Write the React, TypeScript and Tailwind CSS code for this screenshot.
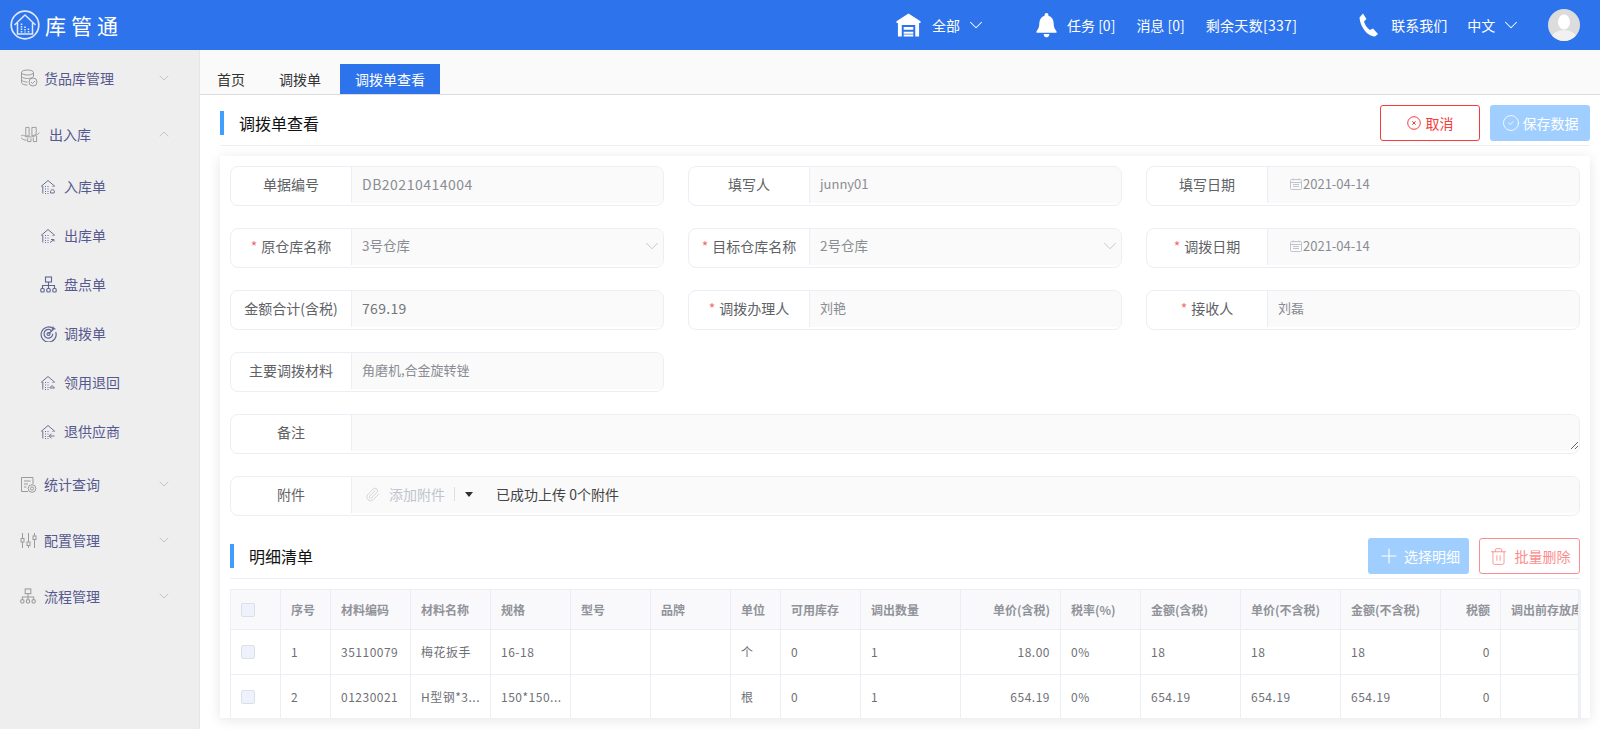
import { ChevronDown, ChevronUp, Plus, Trash2, CircleCheck, Paperclip } from "lucide-react";
import type { ReactNode } from "react";

const font = { fontFamily: '"Noto Sans CJK SC", "Liberation Sans", sans-serif' };

const HomeDots = ({ mark }: { mark: "in" | "out" | "back" | "ret" }) => (
  <svg viewBox="0 0 16 16" className="w-[16px] h-[16px] text-[#6a6f96]" fill="none" stroke="currentColor" strokeWidth="1">
    <path d="M1 7.5 8 1.5l7 6M2.8 7v7.5M13 7v1" />
    <path d="M5 7.5h1M7.5 7.5h1M5 10h1M7.5 10h1M5 12.5h1M7.5 12.5h1M5 14.5h1M7.5 14.5h1" />
    {mark === "in" && <path d="M10.5 12.5a2 2 0 1 1 3.5 1.5h-3.5z" />}
    {mark === "out" && <path d="M10 14.5l4-3M11 11.5h3v2" />}
    {mark === "back" && <path d="M10 12.5l2-2 2.5 2.5h-4.5z" />}
    {mark === "ret" && <path d="M14.5 12H9.5M11.5 9.7 9.2 12l2.3 2.3" />}
  </svg>
);

const iconGray = "w-[17px] h-[17px] text-[#9a9a9a]";

const DbIcon = () => (
  <svg viewBox="0 0 18 18" className="w-[18px] h-[18px] text-[#9a9a9a]" fill="none" stroke="currentColor" strokeWidth="1">
    <ellipse cx="7.5" cy="3.5" rx="6" ry="2.5" />
    <path d="M1.5 3.5v10c0 1.5 2.7 2.5 6 2.5M1.5 7c0 1.5 2.7 2.5 6 2.5s6-1 6-2.5M1.5 10.500c0 1.500 2.700 2.500 6 2.500M13.500 3.500v4" />
    <circle cx="13" cy="13" r="4" />
    <path d="M11 13l1.500 1.500 2.500-2.500" />
  </svg>
);

const InOutIcon = () => (
  <svg viewBox="0 0 22 18" className="w-[21px] h-[17px] text-[#9a9a9a]" fill="none" stroke="currentColor" strokeWidth="1">
    <path d="M6 1.500h3.500v9H6zM12.500 1.500H17v7.500l-4.500 1.500z" />
    <path d="M1 10.500c2-1.500 4-.5 5 1h6c3 0 6-2 8.500-4.500" />
    <path d="M1 12.500c2 2 4 2.500 6 2.500M8 13v3.500h3.500V13M14 12.500v4h3.500v-6" />
  </svg>
);

const OrgIcon = ({ className }: { className: string }) => (
  <svg viewBox="0 0 17 17" className={className} fill="none" stroke="currentColor" strokeWidth="1.100">
    <rect x="5.500" y="1" width="6" height="5" />
    <path d="M8.500 6v3.500M2.500 12.500V9.500h12v3M8.500 9.500v3" />
    <rect x="0.800" y="12.500" width="3.400" height="3.500" rx="1" />
    <rect x="6.800" y="12.500" width="3.400" height="3.500" rx="1" />
    <rect x="12.800" y="12.500" width="3.400" height="3.500" rx="1" />
  </svg>
);

const TargetIcon = () => (
  <svg viewBox="0 0 17 17" className="w-[17px] h-[17px] text-[#5f6592]" fill="none" stroke="currentColor" strokeWidth="1.200">
    <path d="M13.500 3.800A7.500 7.500 0 1 0 15.700 7" />
    <path d="M11.800 6A4.400 4.400 0 1 0 12.800 8.800" />
    <circle cx="8.500" cy="9" r="1.500" />
    <path d="M8.500 9l6-6M13 1.500v2.500h2.500" />
  </svg>
);

const ReportIcon = () => (
  <svg viewBox="0 0 17 17" className={iconGray} fill="none" stroke="currentColor" strokeWidth="1">
    <path d="M8 15.500H1.500v-14h11.500V8" />
    <path d="M4 5h6.500M4 8h4M4 11h2.500" />
    <circle cx="12" cy="12.500" r="3.800" />
    <circle cx="12" cy="12.500" r="1.600" />
  </svg>
);

const SlidersIcon = () => (
  <svg viewBox="0 0 17 17" className={iconGray} fill="none" stroke="currentColor" strokeWidth="1">
    <path d="M2.500 1v5.500M2.500 10v6M8.500 1v9M8.500 13.500V16M14.500 1v3M14.500 7.500V16" />
    <rect x="1" y="6.500" width="3" height="3.500" />
    <rect x="7" y="10" width="3" height="3.500" />
    <rect x="13" y="4" width="3" height="3.500" />
  </svg>
);

const menu: { label: string; icon: ReactNode; gap: string; open?: boolean; children?: { label: string; icon: ReactNode }[] }[] = [
  { label: "货品库管理", icon: <DbIcon />, gap: "ml-[6px]" },
  {
    label: "出入库",
    icon: <InOutIcon />,
    gap: "ml-[8px]",
    open: true,
    children: [
      { label: "入库单", icon: <HomeDots mark="in" /> },
      { label: "出库单", icon: <HomeDots mark="out" /> },
      { label: "盘点单", icon: <OrgIcon className="w-[17px] h-[17px] text-[#5f6592]" /> },
      { label: "调拨单", icon: <TargetIcon /> },
      { label: "领用退回", icon: <HomeDots mark="back" /> },
      { label: "退供应商", icon: <HomeDots mark="ret" /> },
    ],
  },
  { label: "统计查询", icon: <ReportIcon />, gap: "ml-[7px]" },
  { label: "配置管理", icon: <SlidersIcon />, gap: "ml-[7px]" },
  { label: "流程管理", icon: <OrgIcon className="w-[16px] h-[16px] text-[#9a9a9a]" />, gap: "ml-[8px]" },
];

const Sidebar = () => (
  <aside className="w-[200px] shrink-0 bg-[#eeeeee] border-r border-[#e6e6e6]">
    {menu.map((m) => (
      <div key={m.label}>
        <div className="h-[56px] flex items-center pl-[20px] pr-[27px]">
          {m.icon}
          <span className={`${m.gap} text-[14px] text-[#56598f]`}>{m.label}</span>
          <span className="ml-auto text-[#b5b5b5]">
            {m.open ? <ChevronUp size={16} strokeWidth={1.1} /> : <ChevronDown size={16} strokeWidth={1.1} />}
          </span>
        </div>
        {m.children?.map((c) => (
          <div key={c.label} className="h-[49px] flex items-center pl-[40px]">
            <span className="w-[24px]">{c.icon}</span>
            <span className="text-[14px] text-[#56598f]">{c.label}</span>
          </div>
        ))}
      </div>
    ))}
  </aside>
);

const Header = () => (
  <header className="h-[50px] bg-[#2d74ec] flex items-center text-white text-[14px]">
    <svg viewBox="0 0 30 30" className="ml-[10px] w-[30px] h-[30px] shrink-0" fill="none" stroke="#dfe9fb">
      <circle cx="15" cy="15" r="13.800" strokeWidth="1.700" />
      <path d="M4.500 15 15 5l10.500 10M7.500 13v11h15V13" strokeWidth="1.500" />
      <path d="M11.500 13.500v9M15 16.500v6M18.500 18.500v4" strokeWidth="1.600" strokeDasharray="1.500 1" />
    </svg>
    <div className="ml-[5px] text-[21px] leading-none tracking-[5px] w-[80px] whitespace-nowrap">库管通</div>

    <svg viewBox="0 0 26 24" className="ml-[771px] w-[25px] h-[24px]" fill="#fff">
      <path d="M13 0 25.500 8v2H24v14h-4V12H6v12H2V10H.5V8z" />
      <path d="M8 14h10v3H8zM8 19h10v2H8zM8 22h10v2H8z" />
    </svg>
    <span className="ml-[11px]">全部</span>
    <ChevronDown size={22} strokeWidth={1.1} className="ml-[5px]" />

    <svg viewBox="0 0 22 26" className="ml-[49px] w-[21px] h-[25px]" fill="#fff">
      <path d="M11 0c1.200 0 2 .8 2 2v.700c3.500 1 5.500 4 5.500 7.800 0 4 1 6.500 3 8.500v1.500H.5V19c2-2 3-4.500 3-8.500 0-3.800 2-6.800 5.500-7.800V2c0-1.200.8-2 2-2zM8 22h6c0 2-1.300 3.500-3 3.500S8 24 8 22z" />
    </svg>
    <span className="ml-[10px]">任务 [0]</span>
    <span className="ml-[21px]">消息 [0]</span>
    <span className="ml-[21px] tracking-[0.3px]">剩余天数[337]</span>

    <svg viewBox="0 0 22 24" className="ml-[61px] w-[22px] h-[24px]" fill="#fff">
      <path d="M5 .5 8.500 6 6 8.500c.8 3 3 6.500 6 8.500l3-1.500 5 5.500-3 2.500C10 24 2 14 1.500 4.500z" />
    </svg>
    <span className="ml-[11px]">联系我们</span>
    <span className="ml-[20px]">中文</span>
    <ChevronDown size={22} strokeWidth={1.1} className="ml-[5px]" />

    <svg viewBox="0 0 32 32" className="ml-[26px] w-[32px] h-[32px] rounded-full">
      <rect width="32" height="32" fill="#dcdcdc" />
      <ellipse cx="16" cy="13" rx="6" ry="7.500" fill="#fff" />
      <ellipse cx="16" cy="30" rx="13" ry="9" fill="#f1f1f1" />
    </svg>
  </header>
);

const Tabs = () => (
  <div className="h-[45px] shrink-0 bg-[#fafafa] border-b border-[#dcdcdc] flex items-end pl-[2px] gap-[4px] text-[14px]">
    <div className="h-[30px] px-[15px] flex items-center text-[#333]">首页</div>
    <div className="h-[30px] px-[15px] flex items-center text-[#333]">调拨单</div>
    <div className="h-[30px] w-[100px] flex items-center justify-center bg-[#2d74ec] text-white">调拨单查看</div>
  </div>
);

const SectionTitle = ({ title, children }: { title: string; children: ReactNode }) => (
  <div className="flex items-center justify-between border-b border-[#ebeef5] h-[41px] pb-[4px]">
    <div className="flex items-center">
      <span className="w-[4px] h-[24px] bg-[#409eff]" />
      <span className="ml-[15px] text-[16px] text-[#111]">{title}</span>
    </div>
    <div className="flex gap-[10px]">{children}</div>
  </div>
);

const Field = ({ label, required, children, className = "" }: { label: string; required?: boolean; children?: ReactNode; className?: string }) => (
  <div className={`h-[40px] flex border border-[#ebeef5] rounded-[8px] overflow-hidden ${className}`}>
    <div className="w-[120px] shrink-0 flex items-center justify-center text-[14px] text-[#606266] whitespace-nowrap mb-[2px] pb-[2px]">
      {required && <span className="text-[#f56c6c] mr-[4px]">*</span>}
      {label}
    </div>
    <div className="flex-1 min-w-0 bg-[#fafafa] border-l border-[#ebeef5] mb-[2px] pb-[2px] flex items-center pl-[10px] pr-[12px] text-[13px] text-[#8a8d93]">
      {children}
    </div>
  </div>
);

const DateValue = ({ value }: { value: string }) => (
  <>
    <svg viewBox="0 0 12 12" className="ml-[12px] w-[12px] h-[12px] mr-[1px] text-[#c0c4cc]" fill="none" stroke="currentColor">
      <rect x="0.500" y="1.500" width="11" height="10" rx="1" />
      <path d="M.5 4.500h11M3 6.500h6M3 8.500h6M3 .5v2M9 .5v2" />
    </svg>
    {value}
  </>
);

const Select = ({ value }: { value: string }) => (
  <>
    <span className="text-[13.5px] -mt-px">{value}</span>
    <ChevronDown size={22} strokeWidth={1} className="ml-auto -mr-[12px] text-[#c0c4cc]" />
  </>
);

const columns = [
  { label: "序号", w: "w-[50px]" },
  { label: "材料编码", w: "w-[80px]" },
  { label: "材料名称", w: "w-[80px]" },
  { label: "规格", w: "w-[80px]" },
  { label: "型号", w: "w-[80px]" },
  { label: "品牌", w: "w-[80px]" },
  { label: "单位", w: "w-[50px]" },
  { label: "可用库存", w: "w-[80px]" },
  { label: "调出数量", w: "w-[100px]" },
  { label: "单价(含税)", w: "w-[100px]", right: true },
  { label: "税率(%)", w: "w-[80px]" },
  { label: "金额(含税)", w: "w-[100px]" },
  { label: "单价(不含税)", w: "w-[100px]" },
  { label: "金额(不含税)", w: "w-[100px]" },
  { label: "税额", w: "w-[60px]", right: true },
  { label: "调出前存放库位", w: "w-[78px]" },
];

const rows = [
  ["1", "35110079", "梅花扳手", "16-18", "", "", "个", "0", "1", "18.00", "0%", "18", "18", "18", "0", ""],
  ["2", "01230021", "H型钢*3...", "150*150...", "", "", "根", "0", "1", "654.19", "0%", "654.19", "654.19", "654.19", "0", ""],
];

const Box = () => <span className="block w-[14px] h-[14px] rounded-[2px] border border-[#dcdfe6] bg-[#edf2fc]" />;

const DetailTable = () => (
  <div className="mt-[10px] border-l border-t border-[#ebeef5] flex flex-col text-[12px]">
    <div className="flex h-[40px] shrink-0 bg-[#f9f9fb] border-b border-[#ebeef5] font-bold text-[#909399]">
      <div className="w-[50px] shrink-0 border-r border-[#ebeef5] flex items-center pl-[10px]"><Box /></div>
      {columns.map((c) => (
        <div key={c.label} className={`${c.w} shrink-0 border-r border-[#ebeef5] last:border-r-0 flex items-center px-[10px] whitespace-nowrap overflow-hidden ${c.right ? "justify-end" : ""}`}>
          {c.label}
        </div>
      ))}
      <div className="w-[2px] shrink-0 bg-[#edf0f7]" />
    </div>
    {rows.map((r) => (
      <div key={r[0]} className="flex h-[45px] shrink-0 border-b border-[#ebeef5] text-[#6e7076]">
        <div className="w-[50px] shrink-0 border-r border-[#ebeef5] flex items-center pl-[10px]"><Box /></div>
        {columns.map((c, i) => (
          <div key={c.label} className={`${c.w} shrink-0 border-r border-[#ebeef5] last:border-r-0 flex items-center px-[10px] whitespace-nowrap tracking-[0.5px] ${c.right ? "justify-end" : ""}`}>
            {r[i]}
          </div>
        ))}
        <div className="w-[2px] shrink-0 bg-[#edf0f7]" />
      </div>
    ))}
  </div>
);

const App = () => (
  <div className="h-[729px] w-[1600px] overflow-hidden flex flex-col bg-white" style={font}>
    <Header />
    <div className="flex-1 flex min-h-0">
      <Sidebar />
      <main className="flex-1 min-w-0 flex flex-col">
        <Tabs />
        <div className="pl-[20px] pr-[10px] pt-[10px] flex-1 min-h-0 flex flex-col">
          <SectionTitle title="调拨单查看">
            <button className="w-[100px] h-[36px] rounded-[3px] border border-[#f43c3c] bg-white text-[#f43c3c] text-[14px] flex items-center justify-center gap-[5px]">
              <svg viewBox="0 0 14 14" className="w-[14px] h-[14px]" fill="none" stroke="currentColor">
                <circle cx="7" cy="7" r="6.300" />
                <path d="M5.300 5.300l3.400 3.400M8.700 5.300l-3.400 3.400" />
              </svg>
              取消
            </button>
            <button className="w-[100px] h-[36px] rounded-[3px] bg-[#a0cfff] text-white text-[14px] flex items-center justify-center gap-[3px]">
              <CircleCheck size={18} strokeWidth={1.1} />
              保存数据
            </button>
          </SectionTitle>
          <section className="mt-[10px] h-[562px] shrink-0 px-[10px] pt-[10px] overflow-hidden shadow-[0_2px_12px_0_rgba(0,0,0,0.1)]">
            <div className="grid grid-cols-[434px_434px_434px] gap-x-[24px] gap-y-[22px]">
              <Field label="单据编号"><span className="text-[14px] tracking-[0.5px]">DB20210414004</span></Field>
              <Field label="填写人">junny01</Field>
              <Field label="填写日期"><DateValue value="2021-04-14" /></Field>
              <Field label="原仓库名称" required><Select value="3号仓库" /></Field>
              <Field label="目标仓库名称" required><Select value="2号仓库" /></Field>
              <Field label="调拨日期" required><DateValue value="2021-04-14" /></Field>
              <Field label="金额合计(含税)"><span className="text-[14px] tracking-[0.3px] text-[#73767c]">769.19</span></Field>
              <Field label="调拨办理人" required>刘艳</Field>
              <Field label="接收人" required>刘磊</Field>
              <Field label="主要调拨材料">角磨机,合金旋转锉</Field>
              <div className="col-span-2" />
              <Field label="备注" className="col-span-3">
                <textarea disabled className="w-[calc(100%+12px)] shrink-0 h-[36px] bg-transparent outline-none resize-y block" />
              </Field>
              <Field label="附件" className="col-span-3">
                <Paperclip size={15} strokeWidth={1.2} className="ml-[3px] text-[#c8c8c8]" />
                <span className="ml-[9px] text-[14px] text-[#c0c4cc]">添加附件</span>
                <span className="ml-[9px] w-px h-[14px] bg-[#dcdfe6]" />
                <span className="ml-[10px] border-x-[4px] border-x-transparent border-t-[5px] border-t-[#303133]" />
                <span className="ml-[23px] text-[14px] text-[#444]">已成功上传 0个附件</span>
              </Field>
            </div>
            <div className="mt-[22px]">
              <SectionTitle title="明细清单">
                <button className="w-[101px] h-[36px] rounded-[3px] bg-[#a0cfff] text-white text-[14px] flex items-center justify-center gap-[3px]">
                  <Plus size={24} strokeWidth={1.1} />
                  选择明细
                </button>
                <button className="w-[101px] h-[36px] rounded-[3px] border border-[#fa8e8e] bg-white text-[#fa8e8e] text-[14px] flex items-center justify-center gap-[7px]">
                  <Trash2 size={19} strokeWidth={1.1} />
                  批量删除
                </button>
              </SectionTitle>
            </div>
            <DetailTable />
          </section>
        </div>
      </main>
    </div>
  </div>
);

export default App;
